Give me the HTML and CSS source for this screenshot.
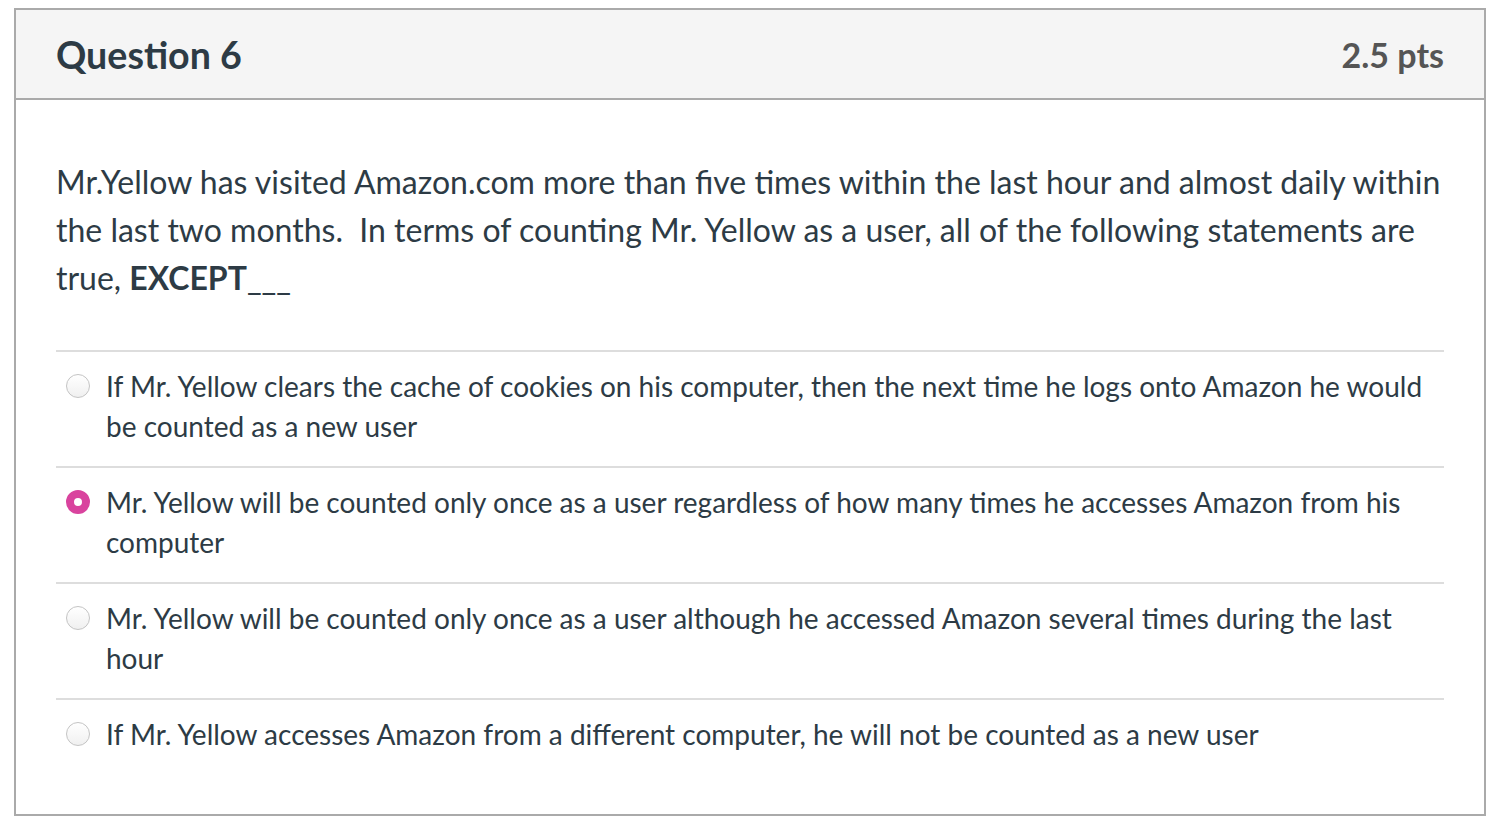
FILE: index.html
```html
<!DOCTYPE html>
<html>
<head>
<meta charset="utf-8">
<link rel="stylesheet" href="styles.css">
</head>
<body>
<div class="question">
  <div class="header">
    <h2 class="title">Question 6</h2>
    <div class="pts">2.5 pts</div>
  </div>
  <div class="content">
    <p class="text">Mr.Yellow has visited Amazon.com more than five times within the last hour and almost daily within the last two months.&nbsp; In terms of counting Mr. Yellow as a user, all of the following statements are true, <strong>EXCEPT</strong>___</p>
    <div class="answers">
      <div class="answer">
        <span class="radio"></span>
        <span class="label">If Mr. Yellow clears the cache of cookies on his computer, then the next time he logs onto Amazon he would be counted as a new user</span>
      </div>
      <div class="answer">
        <span class="radio checked"></span>
        <span class="label">Mr. Yellow will be counted only once as a user regardless of how many times he accesses Amazon from his computer</span>
      </div>
      <div class="answer">
        <span class="radio"></span>
        <span class="label">Mr. Yellow will be counted only once as a user although he accessed Amazon several times during the last hour</span>
      </div>
      <div class="answer">
        <span class="radio"></span>
        <span class="label">If Mr. Yellow accesses Amazon from a different computer, he will not be counted as a new user</span>
      </div>
    </div>
  </div>
</div>
</body>
</html>
```
FILE: styles.css
```css
html, body {
  margin: 0;
  padding: 0;
  background: #fff;
}
body {
  font-family: Lato, "Liberation Sans", sans-serif;
  color: #2d3b45;
  padding: 8px 12px 0 14px;
}
.question {
  width: 1468px;
  border: 2px solid #aaaaaa;
  background: #fff;
}
.header {
  display: flex;
  justify-content: space-between;
  align-items: center;
  height: 88px;
  padding: 0 40px 0 40px;
  background: #f5f5f5;
  border-bottom: 2px solid #aaaaaa;
}
.title {
  margin: 0;
  font-size: 37.6px;
  font-weight: 700;
  color: #2d3b45;
}
.pts {
  font-size: 34px;
  font-weight: 700;
  color: #555555;
}
.content {
  padding: 58px 40px 40px 40px;
}
.text {
  margin: 0 0 48px;
  font-size: 32px;
  line-height: 48px;
}
.text strong {
  font-weight: 700;
}
.answers {
  border-top: 2px solid #dddddd;
}
.answer {
  display: flex;
  align-items: flex-start;
  padding: 14px 0 20px 10px;
  border-bottom: 2px solid #dddddd;
  font-size: 28px;
  line-height: 40px;
}
.answer:last-child {
  border-bottom: none;
}
.radio {
  flex: none;
  width: 22px;
  height: 22px;
  margin: 8px 16px 0 0;
  border: 1px solid #c4c4c4;
  border-radius: 50%;
  background: linear-gradient(#ffffff, #f0f0f0);
}
.radio.checked {
  width: 8px;
  height: 8px;
  border: 8px solid #d9439e;
  background: #fff;
}
.label {
  flex: 1;
}
```
